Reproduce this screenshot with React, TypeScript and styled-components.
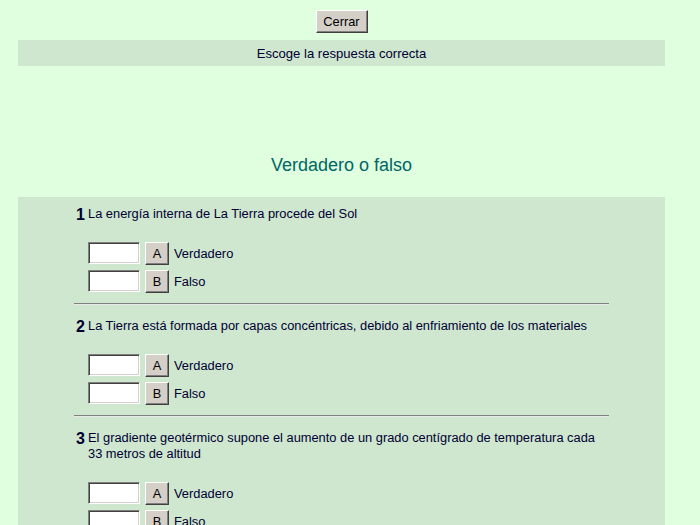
import React from "react";
import styled, { createGlobalStyle } from "styled-components";

const Global = createGlobalStyle`
  html, body { margin: 0; padding: 0; background: #DFFFDF; }
  body { font-family: "Liberation Sans", Arial, sans-serif; color: #000033; }
`;

const Page = styled.div`
  width: 647px;
  margin-left: 18px;
  padding-top: 10px;
`;

const TopBar = styled.div`
  display: flex;
  justify-content: center;
`;

const WinButton = styled.button<{ $w: number; $h: number }>`
  width: ${(p) => p.$w}px;
  height: ${(p) => p.$h}px;
  padding: 0;
  margin: 0;
  font-family: "Liberation Sans", Arial, sans-serif;
  font-size: 12.8px;
  color: #000;
  background: #D4D0C8;
  border: 1px solid;
  border-color: #FFFFFF #404040 #404040 #FFFFFF;
  box-shadow: inset -1px -1px 0 #808080, inset 1px 1px 0 #D4D0C8;
  display: flex;
  align-items: center;
  justify-content: center;
  flex: none;
`;

const Band = styled.div`
  margin-top: 7px;
  height: 26px;
  background: #CFE6CF;
  display: flex;
  align-items: center;
  justify-content: center;
  font-size: 13.1px;
  color: #000033;
`;

const Title = styled.h1`
  margin: 89px 0 22px;
  font-weight: normal;
  font-size: 18px;
  line-height: 20px;
  text-align: center;
  color: #006666;
`;

const Panel = styled.div`
  background: #CFE6CF;
  padding: 9px 0 40px;
  display: flex;
  justify-content: center;
`;

const Inner = styled.div`
  width: 535px;
`;

const Question = styled.div``;

const Header = styled.div`
  display: flex;
  align-items: flex-start;
`;

const Num = styled.div`
  box-sizing: border-box;
  width: 14px;
  height: 16px;
  padding: 2px 0 0 2px;
  font-weight: bold;
  font-size: 16px;
  line-height: 14px;
  color: #000033;
`;

const QText = styled.div`
  width: 515px;
  font-size: 12.85px;
  line-height: 16px;
`;

const Options = styled.div`
  margin: 20px 0 0 14px;
  display: flex;
  flex-direction: column;
  gap: 6px;
`;

const Row = styled.div`
  display: flex;
  align-items: center;
  gap: 5px;
  height: 22px;
`;

const Field = styled.input`
  box-sizing: border-box;
  width: 52px;
  height: 22px;
  margin: 0;
  padding: 0 3px;
  background: #fff;
  border: 1px solid;
  border-color: #808080 #FFFFFF #FFFFFF #808080;
  box-shadow: inset 1px 1px 0 #404040, inset -1px -1px 0 #D4D0C8;
  outline: none;
`;

const Label = styled.span`
  font-size: 12.85px;
  color: #000033;
`;

const Sep = styled.hr`
  margin: 11px 0 13px;
  height: 0;
  border: 0;
  border-top: 1px solid #808080;
  border-bottom: 1px solid #E8E8E8;
`;

const questions = [
  "La energía interna de La Tierra procede del Sol",
  "La Tierra está formada por capas concéntricas, debido al enfriamiento de los materiales",
  "El gradiente geotérmico supone el aumento de un grado centígrado de temperatura cada 33 metros de altitud",
];

export default function App() {
  return (
    <>
      <Global />
      <Page>
        <TopBar>
          <WinButton $w={52} $h={23}>Cerrar</WinButton>
        </TopBar>
        <Band>Escoge la respuesta correcta</Band>
        <Title>Verdadero o falso</Title>
        <Panel>
          <Inner>
            {questions.map((q, i) => (
              <Question key={i}>
                {i > 0 && <Sep />}
                <Header>
                  <Num>{i + 1}</Num>
                  <QText>{q}</QText>
                </Header>
                <Options>
                  <Row>
                    <Field type="text" />
                    <WinButton $w={24} $h={23}>A</WinButton>
                    <Label>Verdadero</Label>
                  </Row>
                  <Row>
                    <Field type="text" />
                    <WinButton $w={24} $h={23}>B</WinButton>
                    <Label>Falso</Label>
                  </Row>
                </Options>
              </Question>
            ))}
          </Inner>
        </Panel>
      </Page>
    </>
  );
}
